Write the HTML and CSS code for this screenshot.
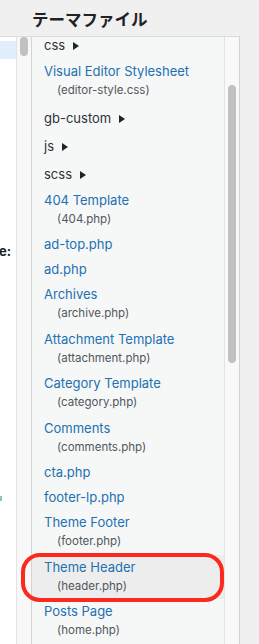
FILE: index.html
```html
<!DOCTYPE html>
<html lang="ja">
<head>
<meta charset="utf-8">
<title>テーマファイル</title>
<link rel="stylesheet" href="styles.css">
</head>
<body>
<h2 class="title">テーマファイル</h2>
<div class="panes">
  <div class="side">
    <div class="side-body">
      <div class="side-selected"></div>
      <div class="side-label"><span>e:</span></div>
      <div class="side-mark"></div>
    </div>
    <div class="track"><div class="thumb thumb-side"></div></div>
  </div>
  <div class="files">
    <div class="files-body">
      <ul class="tree">
        <li class="folder">css</li>
        <li class="file"><a href="#">Visual Editor Stylesheet</a><span class="desc">(editor-style.css)</span></li>
        <li class="folder">gb-custom</li>
        <li class="folder">js</li>
        <li class="folder">scss</li>
        <li class="file"><a href="#">404 Template</a><span class="desc">(404.php)</span></li>
        <li class="file"><a href="#">ad-top.php</a></li>
        <li class="file"><a href="#">ad.php</a></li>
        <li class="file"><a href="#">Archives</a><span class="desc">(archive.php)</span></li>
        <li class="file"><a href="#">Attachment Template</a><span class="desc">(attachment.php)</span></li>
        <li class="file"><a href="#">Category Template</a><span class="desc">(category.php)</span></li>
        <li class="file"><a href="#">Comments</a><span class="desc">(comments.php)</span></li>
        <li class="file"><a href="#">cta.php</a></li>
        <li class="file"><a href="#">footer-lp.php</a></li>
        <li class="file"><a href="#">Theme Footer</a><span class="desc">(footer.php)</span></li>
        <li class="file current"><a href="#">Theme Header</a><span class="desc">(header.php)</span></li>
        <li class="file"><a href="#">Posts Page</a><span class="desc">(home.php)</span></li>
      </ul>
    </div>
    <div class="track track-files"><div class="thumb thumb-files"></div></div>
  </div>
</div>
</body>
</html>
```
FILE: styles.css
```css
html, body {
  margin: 0;
  padding: 0;
}
body {
  width: 259px;
  height: 644px;
  overflow: hidden;
  background: #f0f0f1;
  font-family: Inter, "Liberation Sans", Arial, sans-serif;
  color: #1d2327;
}
.title {
  margin: 0;
  padding: 7px 0 5px 32px;
  font: 700 16.5px/24px "Noto Sans CJK JP", sans-serif;
  color: #1d2327;
}
.panes {
  display: flex;
  height: 608px;
}
.side {
  display: flex;
  flex: none;
  width: 31px;
  border-top: 1px solid #dcdcde;
}
.side-body {
  width: 16px;
  flex: none;
  background: #fff;
  display: flex;
  flex-direction: column;
  overflow: hidden;
}
.side-selected {
  height: 18px;
  margin-top: 4px;
  background: #e2eefb;
}
.side-label {
  display: flex;
  justify-content: flex-end;
  padding-right: 5px;
  margin-top: 182.5px;
  font-size: 13px;
  line-height: 19px;
  font-weight: 700;
  white-space: nowrap;
  color: #1d2327;
}
.side-mark {
  width: 1.5px;
  height: 5px;
  margin-top: 235px;
  background: #8ec3c3;
}
.track {
  flex: none;
  width: 14px;
  border-left: 1px solid #e3e3e3;
  background: #f8f8f8;
}
.thumb {
  width: 8px;
  margin-left: 3px;
  border-radius: 4px;
  background: #c1c1c1;
}
.thumb-side {
  height: 19px;
}
.files {
  display: flex;
  flex: none;
  border: 1px solid #d3d3d5;
  border-top-color: #dcdcde;
  border-bottom: none;
}
.files-body {
  width: 192px;
  flex: none;
  background: #f6f7f7;
}
.track-files {
  background: #f9f9f9;
}
.thumb-files {
  margin-top: 48px;
  height: 278px;
}
.tree {
  list-style: none;
  margin: -6px 0 0;
  padding: 0;
}
.folder {
  padding: 5px 0 4px 12px;
  font-size: 13px;
  line-height: 19px;
  color: #2c3338;
}
.folder::after {
  content: "";
  display: inline-block;
  margin-left: 8px;
  border-left: 6px solid #1d2327;
  border-top: 4px solid transparent;
  border-bottom: 4px solid transparent;
  vertical-align: 0;
}
.file {
  padding: 3px 0 3px 12px;
}
.file a {
  display: block;
  font-size: 13px;
  line-height: 19px;
  color: #2271b1;
  text-decoration: none;
}
.desc {
  display: block;
  padding-left: 13px;
  font-size: 11.5px;
  line-height: 19.5px;
  color: #50575e;
}
.current {
  position: relative;
  background: #ededed;
}
.current::after {
  content: "";
  position: absolute;
  top: -1.5px;
  bottom: -3px;
  left: -11px;
  right: 0;
  border: 4px solid #fb2a1e;
  border-radius: 19px;
}
```
